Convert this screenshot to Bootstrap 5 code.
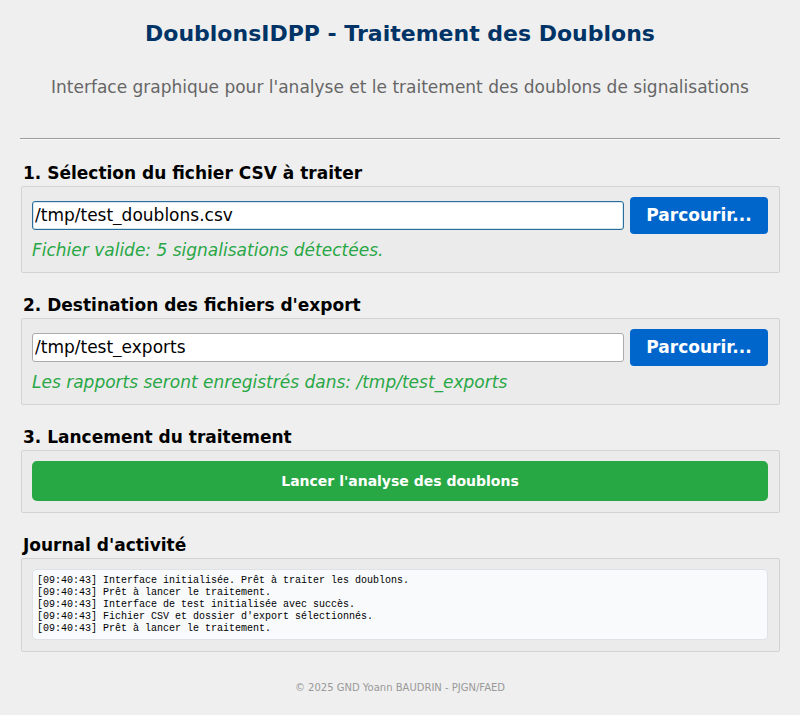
<!DOCTYPE html>
<html lang="fr">
<head>
<meta charset="utf-8">
<meta name="viewport" content="width=device-width, initial-scale=1">
<title>DoublonsIDPP - Traitement des Doublons</title>
<link rel="stylesheet" href="https://cdn.jsdelivr.net/npm/bootstrap@5.3.0/dist/css/bootstrap.min.css">
<style>
  body { background: #efefef; color: #000; font-family: "DejaVu Sans", sans-serif; font-size: 17px; line-height: 20px; }
  .app { padding: 20px 20px 16px; }
  .app-title { font-size: 22px; line-height: 28px; color: #003366; margin-bottom: 28px; }
  .app-intro { color: #666; line-height: 22px; margin-bottom: 40px; }
  .separator { border-top: 1px solid #9c9c9c; border-bottom: 1px solid #f9f9f9; opacity: 1; margin: 0 0 23px; }
  .step { margin: 0 0 22px 1px; }
  .step-title { font-size: 17px; line-height: 20px; padding: 0 2px; margin-bottom: 3px; }
  .journal { margin-bottom: 29px; }
  .panel { background: #ebebeb; border: 1px solid #d3d3d3; border-radius: 2px; padding: 10px 11px 11px 10px; }
  .path-row { gap: 6px; }
  .path-field { height: 29px; padding: 0 2px 2px; font-size: 17px; line-height: 20px; color: #000; border: 1px solid #ababab; border-radius: 3px; background: #fff; }
  .path-field:focus, .path-field.is-current { color: #000; border-color: #2a6f9c; box-shadow: inset 0 0 0 1px #d5e5ef; }
  .btn-browse { background: #0066cc; color: #fff; font-size: 17px; line-height: 21px; min-width: 138px; padding: 8px 16px; border: 0; border-radius: 4px; }
  .btn-launch { background: #28a745; color: #fff; font-size: 14px; line-height: 16px; padding: 12px; border: 0; border-radius: 5px; }
  .btn-browse:hover { background: #0052a3; color: #fff; }
  .btn-launch:hover { background: #218838; color: #fff; }
  .status { color: #28a745; padding: 6px 0 1px; }
  .log { background: #f8fafc; border: 1px solid #dee2e6; border-radius: 4px; padding: 5px 4px 4px; font-family: "Liberation Mono", monospace; font-size: 10px; line-height: 12px; white-space: pre-wrap; }
  .credits { font-size: 10px; line-height: 14px; color: #999; }
</style>
</head>
<body>
<main class="app container-fluid">
  <header class="text-center">
    <h1 class="app-title fw-bold">DoublonsIDPP - Traitement des Doublons</h1>
    <p class="app-intro">Interface graphique pour l'analyse et le traitement des doublons de signalisations</p>
  </header>
  <hr class="separator">

  <section class="step">
    <h2 class="step-title fw-bold"><label for="csv">1. Sélection du fichier CSV à traiter</label></h2>
    <div class="panel">
      <div class="path-row d-flex align-items-center">
        <input id="csv" type="text" class="path-field is-current form-control" value="/tmp/test_doublons.csv">
        <button type="button" class="btn btn-browse fw-bold flex-shrink-0">Parcourir...</button>
      </div>
      <div class="status fst-italic">Fichier valide: 5 signalisations détectées.</div>
    </div>
  </section>

  <section class="step">
    <h2 class="step-title fw-bold"><label for="dest">2. Destination des fichiers d'export</label></h2>
    <div class="panel">
      <div class="path-row d-flex align-items-center">
        <input id="dest" type="text" class="path-field form-control" value="/tmp/test_exports">
        <button type="button" class="btn btn-browse fw-bold flex-shrink-0">Parcourir...</button>
      </div>
      <div class="status fst-italic">Les rapports seront enregistrés dans: /tmp/test_exports</div>
    </div>
  </section>

  <section class="step">
    <h2 class="step-title fw-bold">3. Lancement du traitement</h2>
    <div class="panel">
      <button type="button" class="btn btn-launch fw-bold w-100 d-block">Lancer l'analyse des doublons</button>
    </div>
  </section>

  <section class="step journal">
    <h2 class="step-title fw-bold">Journal d'activité</h2>
    <div class="panel">
      <div class="log" role="log">[09:40:43] Interface initialisée. Prêt à traiter les doublons.
[09:40:43] Prêt à lancer le traitement.
[09:40:43] Interface de test initialisée avec succès.
[09:40:43] Fichier CSV et dossier d'export sélectionnés.
[09:40:43] Prêt à lancer le traitement.</div>
    </div>
  </section>

  <footer class="credits text-center">© 2025 GND Yoann BAUDRIN - PJGN/FAED</footer>
</main>
<script src="https://cdn.jsdelivr.net/npm/bootstrap@5.3.0/dist/js/bootstrap.bundle.min.js"></script>
</body>
</html>
